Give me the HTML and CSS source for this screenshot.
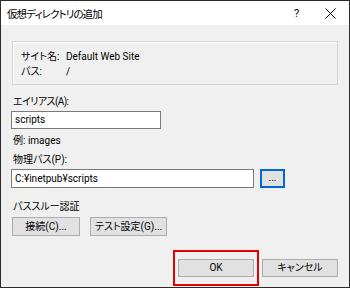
FILE: index.html
```html
<!DOCTYPE html>
<html lang="ja">
<head>
<meta charset="utf-8">
<link rel="stylesheet" href="styles.css">
</head>
<body>
<div class="dialog">
  <div class="titlebar">
    <span class="title">仮想ディレクトリの追加</span>
    <span class="help">?</span>
    <span class="close"><svg width="11" height="11" viewBox="0 0 11 11"><path d="M0.5 0.5 L10.5 10.5 M10.5 0.5 L0.5 10.5" stroke="#000" stroke-width="1" fill="none"/></svg></span>
  </div>
  <div class="content">
    <div class="group">
      <div class="row"><span class="key">サイト名:</span><span class="val">Default Web Site</span></div>
      <div class="row"><span class="key">パス:</span><span class="val">/</span></div>
    </div>
    <div class="label l-alias">エイリアス(A):</div>
    <div class="input short">scripts</div>
    <div class="label l-hint">例: images</div>
    <div class="label l-path">物理パス(P):</div>
    <div class="pathrow">
      <div class="input long">C:¥inetpub¥scripts</div>
      <div class="btn browse">...</div>
    </div>
    <div class="label l-auth">パススルー認証</div>
    <div class="authrow">
      <div class="btn connect">接続(C)...</div>
      <div class="btn test">テスト設定(G)...</div>
    </div>
    <div class="footer">
      <div class="okwrap"><div class="btn ok">OK</div></div>
      <div class="btn cancel">キャンセル</div>
    </div>
  </div>
</div>
</body>
</html>
```
FILE: styles.css
```css
html, body {
  margin: 0;
  padding: 0;
  background: #fff;
}
.dialog {
  width: 350px;
  height: 288px;
  box-sizing: border-box;
  border: 1px solid #2b2b2b;
  background: #f0f0f0;
  font-family: Roboto, "Noto Sans CJK JP", sans-serif;
  font-feature-settings: "palt";
  font-size: 10px;
  color: #000;
  display: flex;
  flex-direction: column;
  white-space: nowrap;
}
.titlebar {
  height: 24px;
  background: #fff;
  display: flex;
  align-items: center;
  padding-left: 6px;
}
.title {
  font-size: 10.5px;
  letter-spacing: -0.9px;
  flex: 1;
}
.help {
  font-size: 11px;
  width: 28px;
}
.close {
  width: 24px;
  display: flex;
  align-items: center;
  padding-left: 3px;
}
.content {
  padding: 16px 10px 0 10px;
  display: flex;
  flex-direction: column;
  flex: 1;
}
.group {
  margin-left: 1px;
  width: 326px;
  height: 44px;
  box-sizing: border-box;
  border: 1px solid #d5d5d5;
  box-shadow: inset 1px 1px 0 #fff;
  padding: 7px 0 0 8px;
}
.row {
  display: flex;
  height: 15px;
  line-height: 15px;
}
.key {
  width: 45px;
  flex-shrink: 0;
}
.label {
  height: 15px;
  line-height: 15px;
  padding-left: 2px;
}
.l-alias { margin-top: 9px; letter-spacing: -0.6px; }
.l-hint { margin-top: 4px; }
.l-path { margin-top: 4px; }
.l-auth { margin-top: 11px; }
.input {
  box-sizing: border-box;
  height: 18px;
  line-height: 16px;
  background: #fff;
  border: 1px solid #7a7a7a;
  padding-left: 3px;
  margin-top: 2px;
}
.short { width: 150px; }
.pathrow {
  display: flex;
  align-items: flex-start;
  gap: 6px;
  margin-top: 2px;
}
.long { width: 243px; height: 19px; line-height: 17px; margin-top: 0; }
.btn {
  box-sizing: border-box;
  background: #e1e1e1;
  border: 1px solid #adadad;
  text-align: center;
}
.browse {
  width: 25px;
  height: 19px;
  line-height: 13px;
  border: 2px solid #0066d9;
}
.authrow {
  display: flex;
  gap: 10px;
  margin-top: 3px;
  padding-left: 1px;
}
.connect { width: 68px; height: 19px; line-height: 17px; }
.test { width: 77px; height: 19px; line-height: 17px; }
.footer {
  display: flex;
  justify-content: flex-end;
  align-items: center;
  margin-top: 14px;
  padding-right: 1px;
  gap: 3px;
}
.okwrap {
  border: 2px solid #e60000;
  padding: 7px 3px 7px 3px;
}
.ok, .cancel {
  width: 76px;
  height: 18px;
  line-height: 16px;
}
```
